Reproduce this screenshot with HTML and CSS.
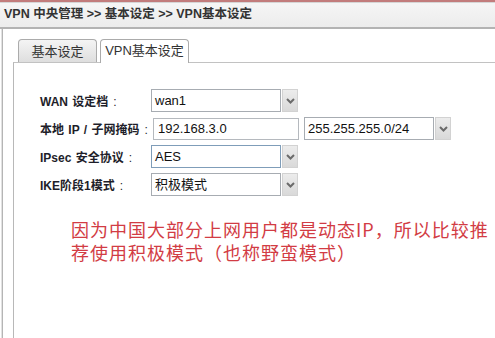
FILE: index.html
```html
<!DOCTYPE html>
<html lang="zh-CN">
<head>
<meta charset="utf-8">
<title>VPN基本设定</title>
<link rel="stylesheet" href="styles.css">
</head>
<body>
<div class="topbar">VPN 中央管理 &gt;&gt; 基本设定 &gt;&gt; VPN基本设定</div>
<div class="frame">
  <div class="tabs">
    <div class="tab">基本设定</div>
    <div class="tab active">VPN基本设定</div>
  </div>
  <div class="panel">
    <div class="form">
      <div class="row">
        <div class="label">WAN 设定档<span class="colon">:</span></div>
        <div class="select w147">
          <div class="field">wan1</div>
          <div class="btn"><svg width="9" height="6" viewBox="0 0 9 6"><path d="M1 1 L4.5 4.5 L8 1" fill="none" stroke="#6b6b6b" stroke-width="2"/></svg></div>
        </div>
      </div>
      <div class="row">
        <div class="label">本地 IP / 子网掩码<span class="colon">:</span></div>
        <div class="input">192.168.3.0</div>
        <div class="select w147 mask">
          <div class="field">255.255.255.0/24</div>
          <div class="btn"><svg width="9" height="6" viewBox="0 0 9 6"><path d="M1 1 L4.5 4.5 L8 1" fill="none" stroke="#6b6b6b" stroke-width="2"/></svg></div>
        </div>
      </div>
      <div class="row">
        <div class="label">IPsec 安全协议<span class="colon">:</span></div>
        <div class="select w147">
          <div class="field focus">AES</div>
          <div class="btn"><svg width="9" height="6" viewBox="0 0 9 6"><path d="M1 1 L4.5 4.5 L8 1" fill="none" stroke="#6b6b6b" stroke-width="2"/></svg></div>
        </div>
      </div>
      <div class="row">
        <div class="label">IKE阶段1模式<span class="colon">:</span></div>
        <div class="select w147">
          <div class="field">积极模式</div>
          <div class="btn"><svg width="9" height="6" viewBox="0 0 9 6"><path d="M1 1 L4.5 4.5 L8 1" fill="none" stroke="#6b6b6b" stroke-width="2"/></svg></div>
        </div>
      </div>
    </div>
    <p class="note">因为中国大部分上网用户都是动态IP，所以比较推荐使用积极模式（也称野蛮模式）</p>
  </div>
</div>
</body>
</html>
```
FILE: styles.css
```css
html, body {
  margin: 0;
  padding: 0;
  background: #fff;
  overflow: hidden;
}
body {
  width: 495px;
  height: 338px;
  font-family: "Liberation Sans", "Noto Sans CJK SC", sans-serif;
  color: #222;
}
.topbar {
  height: 25px;
  border-top: 2px solid #c27c7c;
  border-bottom: 2px solid #b3b3b3;
  box-shadow: inset 0 1px 0 #d6d6d6;
  background: linear-gradient(#f6f6f6, #ececec);
  padding-left: 4px;
  font-size: 12.5px;
  font-weight: bold;
  color: #333;
  line-height: 25px;
  white-space: nowrap;
}
.frame {
  margin-left: 2px;
  border-left: 1px solid #b5b5b5;
  box-shadow: -1px 0 0 #e2e2e2;
  padding: 10px 0 0 10px;
  height: 300px;
}
.tabs {
  display: flex;
  gap: 3px;
  padding-left: 5px;
  height: 23px;
  align-items: flex-end;
}
.tab {
  box-sizing: border-box;
  height: 23px;
  width: 79px;
  border: 1px solid #ababab;
  border-bottom: none;
  border-radius: 4px 4px 0 0;
  background: linear-gradient(#f4f4f4, #dedede);
  font-size: 13px;
  line-height: 22px;
  text-align: center;
  color: #333;
  font-family: "Noto Sans CJK SC", sans-serif;
}
.tab.active {
  width: 89px;
  background: #fff;
  height: 24px;
  margin-bottom: -1px;
  position: relative;
  font-family: "Liberation Sans", "Noto Sans CJK SC", sans-serif;
}
.panel {
  border-top: 1px solid #c2c2c2;
  border-left: 1px solid #b8b8b8;
  height: 280px;
}
.form {
  padding: 26px 0 0 26px;
  display: flex;
  flex-direction: column;
  gap: 5px;
}
.row {
  display: flex;
  align-items: center;
  height: 23px;
}
.label {
  width: 111px;
  font-size: 12px;
  font-weight: bold;
  color: #1e1e2a;
  white-space: nowrap;
  word-spacing: 1px;
}
.colon {
  font-weight: normal;
  margin-left: 5px;
}
.select {
  display: flex;
  height: 23px;
  box-sizing: border-box;
}
.w147 { width: 147px; }
.mask { margin-left: 5px; }
.field {
  flex: 1;
  box-sizing: border-box;
  border: 1px solid #a7acb2;
  background: #fff;
  font-size: 13px;
  line-height: 21px;
  padding-left: 3px;
  color: #111;
  white-space: nowrap;
  overflow: hidden;
}
.field.focus {
  border-color: #7f9db9;
}
.btn {
  width: 16px;
  margin-left: 1px;
  box-sizing: border-box;
  border: 1px solid #d2d2d2;
  background: linear-gradient(#ececec, #d9d9d9);
  display: flex;
  align-items: center;
  justify-content: center;
}
.input {
  box-sizing: border-box;
  width: 146px;
  height: 22px;
  margin-left: 2px;
  border: 1px solid #b5b9be;
  font-size: 13px;
  line-height: 20px;
  padding-left: 4px;
  color: #111;
}
.note {
  margin: 22px 0 0 57px;
  width: 425px;
  font-family: "Noto Sans CJK SC", sans-serif;
  font-size: 18px;
  letter-spacing: 1px;
  line-height: 23px;
  color: #d23c44;
}
```
